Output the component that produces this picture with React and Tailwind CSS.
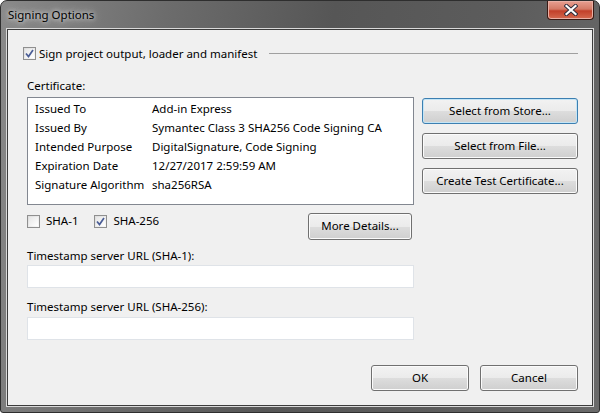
import React from "react";

const font = { fontFamily: "'Noto Sans', 'Liberation Sans', sans-serif" };

function CheckBox({ checked }) {
    return (
        <span className="w-[13px] h-[13px] border border-[#8f8f8f] bg-[linear-gradient(135deg,#dcdcdc,#f8f8f8)] flex items-center justify-center shrink-0 p-[1px]">
            <span className="w-full h-full bg-[linear-gradient(135deg,#e6e6e6,#ffffff)] flex items-center justify-center">
                {checked && (
                    <svg width="9" height="9" viewBox="0 0 9 9">
                        <path d="M1 4.5 L3.5 7.5 L8 1" fill="none" stroke="#4a5d96" strokeWidth="1.7" />
                    </svg>
                )}
            </span>
        </span>
    );
}

function Button({ children, focused, className = "" }) {
    return (
        <button
            className={
                "h-[26px] rounded-[3px] border text-[11.5px] text-black flex items-center justify-center bg-[linear-gradient(#f2f2f2_0%,#ebebeb_50%,#dddddd_51%,#cfcfcf_100%)] " +
                (focused ? "border-[#3c7fb1] shadow-[inset_0_0_0_1px_#c4e5f6]" : "border-[#707070] shadow-[inset_0_0_0_1px_#fbfbfb]") +
                " " + className
            }
        >
            {children}
        </button>
    );
}

const certRows = [
    ["Issued To", "Add-in Express"],
    ["Issued By", "Symantec Class 3 SHA256 Code Signing CA"],
    ["Intended Purpose", "DigitalSignature, Code Signing"],
    ["Expiration Date", "12/27/2017 2:59:59 AM"],
    ["Signature Algorithm", "sha256RSA"],
];

export default function App() {
    return (
        <div className="w-[600px] h-[413px] bg-white" style={font}>
            <div className="w-[600px] h-[413px] rounded-t-[7px] rounded-b-[3px] border border-[#2e2e2e] bg-[linear-gradient(100deg,#8a8a8a_0%,#6c6c6c_25%,#565656_50%,#5c5c5c_75%,#6a6a6a_100%)] flex flex-col">
                {/* Title bar */}
                <div className="h-[28px] flex items-start justify-between">
                    <div className="pl-[7px] pt-[5px] text-[11.5px] text-black [text-shadow:0_0_8px_#d8d8d8,0_0_4px_#e8e8e8]">
                        Signing Options
                    </div>
                    <div className="mr-[5px] w-[47px] h-[19px] rounded-b-[4px] border border-t-0 border-[#3a1a14] bg-[linear-gradient(#e8a092_0%,#d47a66_45%,#c2402a_55%,#d46a50_100%)] flex items-center justify-center shadow-[inset_0_0_0_1px_#e9b0a5]">
                        <svg width="14" height="12" viewBox="0 0 14 12">
                            <path d="M2.5 2 L11.5 10 M11.5 2 L2.5 10" stroke="#2b2b3a" strokeWidth="4" strokeLinecap="square" />
                            <path d="M2.5 2 L11.5 10 M11.5 2 L2.5 10" stroke="#ffffff" strokeWidth="2.2" strokeLinecap="square" />
                        </svg>
                    </div>
                </div>

                {/* Client area */}
                <div className="mx-[6px] h-[377px] border border-[#3c3c3c] bg-[#f0f0f0] shadow-[0_0_0_1px_#d9d9d9] flex flex-col pl-[19px] pr-[14px] text-[11.5px] text-black">
                    <div className="mt-[17px] -ml-[4px] h-[13px] flex items-center">
                        <CheckBox checked />
                        <span className="ml-[3px] leading-none">Sign project output, loader and manifest</span>
                        <span className="flex-1 h-px bg-[#a0a0a0] ml-[12px]" />
                    </div>

                    <div className="mt-[20px] leading-none">Certificate:</div>

                    <div className="mt-[5px] grid grid-cols-[387px_156px] gap-x-[8px]">
                        <div className="h-[108px] border border-[#828790] bg-white pt-[2px] pl-[7px]">
                            {certRows.map(([k, v]) => (
                                <div key={k} className="h-[19px] flex items-center">
                                    <span className="w-[117px]">{k}</span>
                                    <span>{v}</span>
                                </div>
                            ))}
                        </div>
                        <div className="flex flex-col gap-[9px] pt-[1px]">
                            <Button focused>Select from Store...</Button>
                            <Button>Select from File...</Button>
                            <Button>Create Test Certificate...</Button>
                        </div>
                    </div>

                    <div className="mt-[8px] w-[387px] flex items-start">
                        <div className="mt-[2px] h-[13px] flex items-center">
                            <CheckBox />
                            <span className="ml-[6px]">SHA-1</span>
                            <span className="ml-[16px]"><CheckBox checked /></span>
                            <span className="ml-[6px]">SHA-256</span>
                        </div>
                        <Button className="ml-auto mr-[2px] w-[104px] h-[27px]">More Details...</Button>
                    </div>

                    <div className="mt-[10px] leading-none">Timestamp server URL (SHA-1):</div>
                    <input className="mt-[4px] w-[387px] h-[23px] bg-white border border-[#dfe3e8] outline-none" />

                    <div className="mt-[13px] leading-none">Timestamp server URL (SHA-256):</div>
                    <input className="mt-[4px] w-[387px] h-[23px] bg-white border border-[#dfe3e8] outline-none" />

                    <div className="mt-[25px] flex justify-end gap-[11px]">
                        <Button className="w-[98px]">OK</Button>
                        <Button className="w-[98px]">Cancel</Button>
                    </div>
                </div>
            </div>
        </div>
    );
}
